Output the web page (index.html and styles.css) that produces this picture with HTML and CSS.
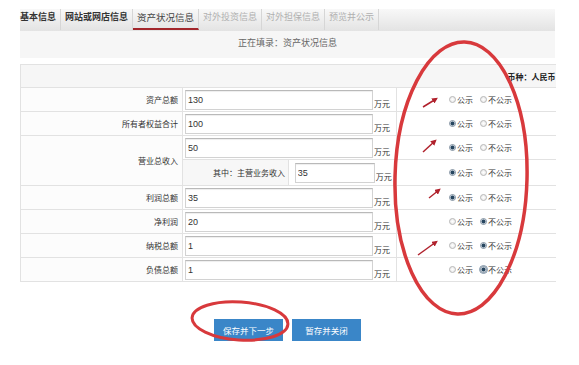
FILE: index.html
```html
<html lang="zh-CN">

<head>
  <meta charset="UTF-8">
  <meta name="viewport" content="width=device-width, initial-scale=1.0">
  <title>资产状况信息</title>
  <link rel="stylesheet" href="styles.css">
</head>

<body>
  <div class="page">
    <ul class="tabs">
      <li class="done">基本信息</li>
      <li class="done">网站或网店信息</li>
      <li class="active">资产状况信息</li>
      <li>对外投资信息</li>
      <li>对外担保信息</li>
      <li>预览并公示</li>
    </ul>
    <div class="status">正在填录：资产状况信息</div>

    <table class="asset-table">
      <colgroup>
        <col class="c-label">
        <col class="c-value">
        <col class="c-pub">
      </colgroup>
      <tr class="head">
        <td colspan="3">币种：人民币</td>
      </tr>
      <tr>
        <th>资产总额</th>
        <td class="val"><input value="130"><span class="unit">万元</span></td>
        <td class="pub"><label class="opt"><i class="dot"></i>公示</label><label class="opt"><i class="dot"></i>不公示</label></td>
      </tr>
      <tr>
        <th>所有者权益合计</th>
        <td class="val"><input value="100"><span class="unit">万元</span></td>
        <td class="pub"><label class="opt"><i class="dot on"></i>公示</label><label class="opt"><i class="dot"></i>不公示</label></td>
      </tr>
      <tr>
        <th rowspan="2">营业总收入</th>
        <td class="val"><input value="50"><span class="unit">万元</span></td>
        <td class="pub"><label class="opt"><i class="dot on"></i>公示</label><label class="opt"><i class="dot"></i>不公示</label></td>
      </tr>
      <tr>
        <td class="val sub">
          <span class="sub-label">其中：主营业务收入</span>
          <input class="short" value="35"><span class="unit">万元</span>
        </td>
        <td class="pub"><label class="opt"><i class="dot on"></i>公示</label><label class="opt"><i class="dot"></i>不公示</label></td>
      </tr>
      <tr>
        <th>利润总额</th>
        <td class="val"><input value="35"><span class="unit">万元</span></td>
        <td class="pub"><label class="opt"><i class="dot on"></i>公示</label><label class="opt"><i class="dot"></i>不公示</label></td>
      </tr>
      <tr>
        <th>净利润</th>
        <td class="val"><input value="20"><span class="unit">万元</span></td>
        <td class="pub"><label class="opt"><i class="dot"></i>公示</label><label class="opt"><i class="dot on"></i>不公示</label></td>
      </tr>
      <tr>
        <th>纳税总额</th>
        <td class="val"><input value="1"><span class="unit">万元</span></td>
        <td class="pub"><label class="opt"><i class="dot"></i>公示</label><label class="opt"><i class="dot on"></i>不公示</label></td>
      </tr>
      <tr>
        <th>负债总额</th>
        <td class="val"><input value="1"><span class="unit">万元</span></td>
        <td class="pub"><label class="opt"><i class="dot"></i>公示</label><label class="opt focus"><i class="dot on"></i>不公示</label></td>
      </tr>
    </table>

    <div class="actions">
      <button type="button">保存并下一步</button>
      <button type="button">暂存并关闭</button>
    </div>
  </div>

  <!-- hand-drawn red marks on the screenshot -->
  <svg class="marks" width="579" height="365" viewBox="0 0 579 365">
    <defs>
      <marker id="ah" markerWidth="4" markerHeight="4" refX="2.5" refY="2" orient="auto">
        <path d="M0,0 L4,2 L0,4 z" fill="#b0212c"/>
      </marker>
    </defs>
    <ellipse cx="461" cy="178" rx="66" ry="136" transform="rotate(1.5 461 178)" fill="none" stroke="#d8393c" stroke-width="3.5"/>
    <ellipse cx="240" cy="321" rx="48" ry="19" transform="rotate(4 240 321)" fill="none" stroke="#d8393c" stroke-width="3"/>
    <g stroke="#b0212c" stroke-width="1.5" marker-end="url(#ah)">
      <line x1="423" y1="107" x2="436" y2="99"/>
      <line x1="423" y1="152" x2="435" y2="141"/>
      <line x1="429" y1="198" x2="439" y2="190"/>
      <line x1="418" y1="255" x2="436" y2="242"/>
    </g>
  </svg>
</body>

</html>
```

FILE: styles.css
```css
* {
  box-sizing: border-box;
  margin: 0;
  padding: 0;
}

body {
  position: relative;
  width: 579px;
  height: 365px;
  overflow: hidden;
  background: #FFF;
  color: #333;
  font-family: "Noto Sans CJK SC", "Liberation Sans", sans-serif;
}

.page {
  padding: 9px 24px 0 20px;
}

.tabs {
  display: flex;
  height: 22px;
  list-style: none;
  background: linear-gradient(#F8F8F8, #E3E3E3);
}

.tabs li {
  height: 21px;
  padding: 1px 4px 0;
  border-right: 1px solid #D6D6D6;
  font-size: 9px;
  line-height: 14px;
  color: #B0B0B0;
  white-space: nowrap;
}

.tabs li:first-child {
  padding-left: 0;
}

.tabs li.done {
  color: #333;
  font-weight: bold;
}

.tabs li.active {
  color: #444;
  font-size: 9.5px;
  border-bottom: 2px solid #A2262B;
}

.status {
  height: 27px;
  background: #F6F6F6;
  text-align: center;
  font-size: 9px;
  line-height: 24px;
  color: #666;
}

.asset-table {
  width: 535px;
  margin-top: 6px;
  border-collapse: collapse;
  table-layout: fixed;
}

.c-label {
  width: 162px;
}

.c-value {
  width: 214px;
}

.c-pub {
  width: 159px;
}

.asset-table th,
.asset-table td {
  height: 24px;
  padding: 0;
  border-top: 1px solid #E2E2E2;
  border-bottom: 1px solid #E2E2E2;
  font-size: 8px;
  font-weight: normal;
  vertical-align: middle;
}

.asset-table th {
  padding-right: 4px;
  border-left: 1px solid #E2E2E2;
  border-right: 1px solid #E2E2E2;
  background: #FCFCFC;
  text-align: right;
  color: #333;
}

.asset-table tr.head td {
  height: 23px;
  border-left: 1px solid #E2E2E2;
  background: #F6F6F6;
  text-align: right;
  font-weight: bold;
  color: #222;
}

.val {
  padding-left: 2px !important;
  border-right: 1px solid #E2E2E2;
  white-space: nowrap;
}

.val input {
  width: 188px;
  height: 20px;
  padding: 0 2px;
  border: 1px solid #D2D2D2;
  border-top-color: #B9B9B9;
  box-shadow: inset 0 1px 1px rgba(0, 0, 0, .07);
  font-family: "Liberation Sans", sans-serif;
  font-size: 9px;
  color: #333;
  vertical-align: middle;
}

.val input.short {
  width: 80px;
}

.unit {
  display: inline-block;
  margin-left: 1px;
  font-size: 8px;
  line-height: 10px;
  vertical-align: -5px;
}

.val.sub {
  padding-left: 0 !important;
}

.sub-label {
  display: inline-block;
  width: 106px;
  height: 25px;
  margin-right: 4px;
  padding-right: 3px;
  border-right: 1px solid #E2E2E2;
  background: #F7F7F7;
  text-align: right;
  line-height: 25px;
  vertical-align: middle;
}

.pub {
  padding-left: 52px !important;
  white-space: nowrap;
}

.opt {
  display: inline-flex;
  align-items: center;
  margin-right: 7px;
  font-size: 8px;
  line-height: 10px;
  color: #333;
}

.dot {
  display: inline-block;
  width: 7px;
  height: 7px;
  margin-right: 1px;
  border: 1px solid #B8B8B8;
  border-radius: 50%;
  background: radial-gradient(circle, #FFF 0, #E4E4E4 100%);
}

.dot.on {
  border-color: #8C9AA8;
  background: radial-gradient(circle, #27465F 0, #27465F 1.6px, #D3DCE4 2.3px);
}

.opt.focus .dot {
  outline: 1px solid #7F93A6;
  outline-offset: 0;
}

.actions {
  display: flex;
  justify-content: center;
  gap: 9px;
  margin-top: 37px;
}

.actions button {
  all: unset;
  width: 69px;
  height: 22px;
  background: #3A86C8;
  color: #FFF;
  text-align: center;
  font-family: "Noto Sans CJK SC", sans-serif;
  font-size: 8.5px;
  line-height: 22px;
}

.marks {
  position: absolute;
  left: 0;
  top: 0;
  pointer-events: none;
}
```
